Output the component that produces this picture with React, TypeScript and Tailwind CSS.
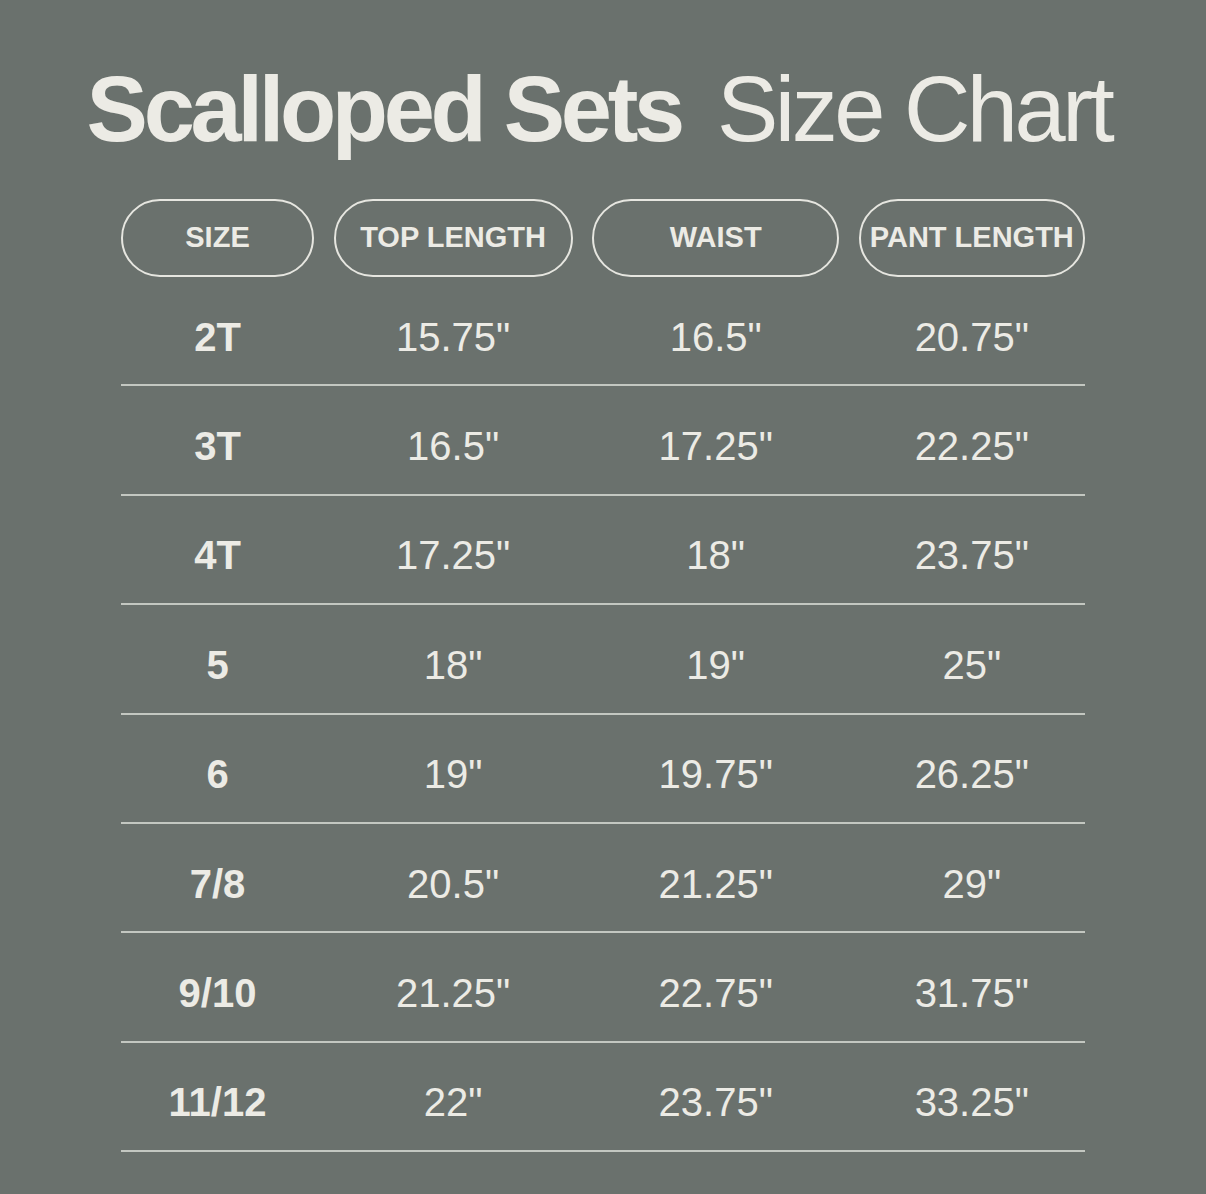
import React from "react";

const headers = ["SIZE", "TOP LENGTH", "WAIST", "PANT LENGTH"];
const rows: string[][] = [
  ["2T", '15.75"', '16.5"', '20.75"'],
  ["3T", '16.5"', '17.25"', '22.25"'],
  ["4T", '17.25"', '18"', '23.75"'],
  ["5", '18"', '19"', '25"'],
  ["6", '19"', '19.75"', '26.25"'],
  ["7/8", '20.5"', '21.25"', '29"'],
  ["9/10", '21.25"', '22.75"', '31.75"'],
  ["11/12", '22"', '23.75"', '33.25"'],
];

export default function App() {
  return (
    <div
      className="w-[1206px] h-[1194px] bg-[#6a716d] text-[#ecebe5] flex flex-col items-center overflow-hidden"
      style={{ fontFamily: '"Liberation Sans", Arial, sans-serif' }}
    >
      <h1 className="mt-[63px] ml-[-8px] h-[92px] text-[92px] leading-[92px] flex items-baseline gap-[36px] whitespace-nowrap">
        <span className="font-bold tracking-[-4.3px]">Scalloped Sets</span>
        <span className="font-normal tracking-[-3.5px]">Size Chart</span>
      </h1>
      <div className="mt-[44px] w-[964px]">
        <div className="grid grid-cols-[193px_239px_247px_226px] gap-x-[19.6px]">
          {headers.map((h) => (
            <div
              key={h}
              className="h-[78px] rounded-full border-2 border-[#e6e6e0] flex items-center justify-center text-[29px] font-bold whitespace-nowrap"
            >
              {h}
            </div>
          ))}
        </div>
        {rows.map((r, i) => (
          <div
            key={i}
            className="grid grid-cols-[193px_239px_247px_226px] gap-x-[19.6px] h-[109.375px] border-b-2 border-[#c3c7c1] pt-[12px] items-center"
          >
            {r.map((c, j) => (
              <div
                key={j}
                className={
                  "text-center text-[40px] leading-none " +
                  (j === 0 ? "font-bold" : "font-normal")
                }
              >
                {c}
              </div>
            ))}
          </div>
        ))}
      </div>
    </div>
  );
}
